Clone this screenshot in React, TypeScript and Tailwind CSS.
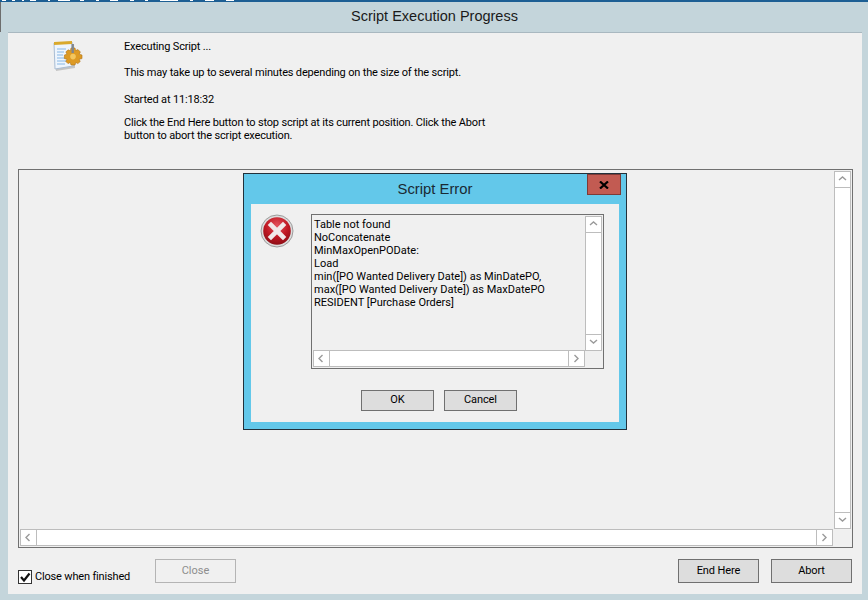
import React from 'react';

const font = "font-['Roboto','Liberation_Sans',Arial,sans-serif]";
const titleFont = "font-['Liberation_Sans',Arial,sans-serif]";

const Chevron: React.FC<{ dir: 'up' | 'down' | 'left' | 'right' }> = ({ dir }) => {
  const paths = {
    up: 'M1 5 L4.5 2 L8 5',
    down: 'M1 2 L4.5 5 L8 2',
    left: 'M5.5 1 L2 4.5 L5.5 8',
    right: 'M2.5 1 L6 4.5 L2.5 8',
  };
  return (
    <svg width="9" height="9" viewBox="0 0 9 9" fill="none" stroke="#9a9a9a" strokeWidth="1.4">
      <path d={paths[dir]} />
    </svg>
  );
};

const ArrowBox: React.FC<{ dir: 'up' | 'down' | 'left' | 'right'; className: string }> = ({ dir, className }) => (
  <div className={`flex items-center justify-center shrink-0 bg-white border-[#bdbdbd] ${className}`}>
    <Chevron dir={dir} />
  </div>
);

const VScroll: React.FC = () => (
  <div className="flex flex-col h-full w-[17px] border border-[#bdbdbd] bg-white">
    <ArrowBox dir="up" className="h-[16px] border-b" />
    <div className="flex-1" />
    <ArrowBox dir="down" className="h-[16px] border-t" />
  </div>
);

const HScroll: React.FC = () => (
  <div className="flex w-full h-[17px] border border-[#bdbdbd] bg-white">
    <ArrowBox dir="left" className="w-[16px] border-r" />
    <div className="flex-1" />
    <ArrowBox dir="right" className="w-[16px] border-l" />
  </div>
);

const Btn: React.FC<{ label: string; className?: string }> = ({ label, className }) => (
  <div
    className={`flex items-center justify-center bg-[#dddddd] border border-[#707070] text-[11px] tracking-[-0.1px] text-black ${className ?? ''}`}
  >
    {label}
  </div>
);

const NoteIcon: React.FC = () => (
  <svg width="30" height="32" viewBox="0 0 30 32" className="block">
    <path d="M2 5 L21 4 L22 28 L3 31 Z" fill="#000" opacity="0.18" />
    <path d="M1 3 L19 2 L20 26 L2 29 Z" fill="#eef5fd" stroke="#a9bdd4" strokeWidth="1" />
    <path d="M1 2 L19 1 L19 4 L1 5 Z" fill="#d9a92c" />
    <path d="M4 9 H13 M4 12 H11 M4 15 H10 M4 18 H13 M4 21 H15 M4 24 H12" stroke="#86b7e6" strokeWidth="1" />
    <path
      d="M18 8 L22 8 L22.6 10.6 L25 9.6 L27.4 12 L26.2 14.2 L29 15 L29 18.6 L26.2 19.2 L27.2 21.6 L24.8 23.6 L22.8 22.4 L22 25 L18 25 L17.2 22.4 L15 23.6 L12.8 21.4 L14 19.2 L11.4 18.6 L11.4 15 L14 14.2 L12.8 12 L15 9.8 L17.4 10.8 Z"
      fill="#dd9a24"
      stroke="#b0741a"
      strokeWidth="0.6"
    />
    <circle cx="20" cy="16.6" r="2.8" fill="#f3c65e" />
    <rect x="18.5" y="4" width="2.4" height="9" fill="#7f858e" />
  </svg>
);

const ErrorIcon: React.FC = () => (
  <svg width="34" height="34" viewBox="0 0 34 34" className="block">
    <defs>
      <radialGradient id="err" cx="50%" cy="30%" r="75%">
        <stop offset="0%" stopColor="#e4525c" />
        <stop offset="55%" stopColor="#bf1722" />
        <stop offset="100%" stopColor="#860c14" />
      </radialGradient>
    </defs>
    <circle cx="17" cy="17" r="16" fill="#dcdcdc" stroke="#8a8a8a" strokeWidth="0.8" />
    <circle cx="17" cy="17" r="13.8" fill="url(#err)" />
    <path d="M11 11 L23 23 M23 11 L11 23" stroke="#f1e9e9" strokeWidth="4.6" strokeLinecap="square" />
  </svg>
);

const App: React.FC = () => {
  return (
    <div className={`${font} relative w-[868px] h-[600px] overflow-hidden bg-[#c4d5db] text-black`}>
      <div className="h-[2px] bg-[#1d5f94] overflow-hidden">
        {/* clipped tail of the window behind */}
        <svg width="240" height="2" className="block">
          <path
            d="M2 0.5 H6 M12 0.5 H15 M22 0.5 H24 M30 0.5 H36 M48 0.5 H50 M58 0.5 H70 M80 0.5 H84 M96 0.5 H99 M110 0.5 H118 M130 0.5 H134 M145 0.5 H148 M160 0.5 H178 M190 0.5 H193 M205 0.5 H214 M226 0.5 H234"
            stroke="#fff"
            strokeWidth="1"
          />
        </svg>
      </div>
      <div
        className={`${titleFont} h-[30px] flex items-center justify-center text-[14.5px] text-[#1a1a1a] border-l border-[#6d6d6d]`}
      >
        Script Execution Progress
      </div>
      <div className="ml-[8px] mr-[6px] h-[562px] flex flex-col bg-[#f0f0f0] border-t border-[#a9b8c0] relative">
        <div className="h-[136px] shrink-0 flex">
          <div className="w-[116px] pl-[45px] pt-[7px] shrink-0">
            <NoteIcon />
          </div>
          <div className="text-[11px] tracking-[-0.17px] leading-[13px] pt-[7px]">
            <p>Executing Script ...</p>
            <p className="mt-[13px]">This may take up to several minutes depending on the size of the script.</p>
            <p className="mt-[14px]">Started at 11:18:32</p>
            <p className="mt-[10px]">
              Click the End Here button to stop script at its current position. Click the Abort
              <br />
              button to abort the script execution.
            </p>
          </div>
        </div>
        <div className="ml-[10px] w-[835px] h-[379px] shrink-0 border border-[#707070] p-[1px] flex flex-col">
          <div className="flex-1 flex justify-end min-h-0">
            <VScroll />
          </div>
          <div className="w-[813px]">
            <HScroll />
          </div>
        </div>
        <div className="flex items-start pt-[11px] pl-[10px]">
          <div className="flex items-center w-[137px] mt-[10px]">
            <div className="w-[14px] h-[14px] border border-[#333] bg-white flex items-center justify-center">
              <svg width="12" height="12" viewBox="0 0 12 12" fill="none" stroke="#111" strokeWidth="2.2">
                <path d="M2 6 L5 9.5 L10.5 2.5" />
              </svg>
            </div>
            <span className="text-[11px] tracking-[-0.17px] ml-[3px]">Close when finished</span>
          </div>
          <div className="w-[81px] h-[24px] flex items-center justify-center border border-[#b4b4b4] text-[11px] text-[#8d8d8d]">
            Close
          </div>
          <Btn label="End Here" className="ml-[442px] w-[81px] h-[24px]" />
          <Btn label="Abort" className="ml-[12px] w-[81px] h-[24px]" />
        </div>
      </div>

      {/* modal error dialog over the progress window */}
      <div className="absolute left-[243px] top-[173px] w-[384px] h-[257px] border border-[#22303a] bg-[#63c8ea] pt-[30px] px-[7px] pb-[7px]">
        <div className={`${titleFont} absolute left-0 right-0 top-[6px] text-center text-[14.8px] leading-[18px] text-[#1a2a33]`}>
          Script Error
        </div>
        <div className="absolute right-[5px] top-0 w-[34px] h-[21px] bg-[#c25b52] border border-[#7e3a36] flex items-center justify-center">
          <svg width="10" height="8" viewBox="0 0 10 8" stroke="#000" strokeWidth="2.2" fill="none">
            <path d="M1 0.5 L9 7.5 M9 0.5 L1 7.5" />
          </svg>
        </div>
        <div className="h-[218px] bg-[#f0f0f0] flex flex-col">
          <div className="flex pt-[10px] pl-[9px]">
            <div className="w-[51px] shrink-0">
              <ErrorIcon />
            </div>
            <div className="w-[293px] h-[155px] border border-[#707070] p-[1px] flex">
              <div className="flex-1 flex flex-col min-w-0">
                <div className="flex-1 text-[11px] leading-[13px] pl-[1px] pt-[2px]">
                  <p>Table not found</p>
                  <p>NoConcatenate</p>
                  <p>MinMaxOpenPODate:</p>
                  <p>Load</p>
                  <p>min([PO Wanted Delivery Date]) as MinDatePO,</p>
                  <p>max([PO Wanted Delivery Date]) as MaxDatePO</p>
                  <p>RESIDENT [Purchase Orders]</p>
                </div>
                <HScroll />
              </div>
              <div className="h-[135px]">
                <VScroll />
              </div>
            </div>
          </div>
          <div className="flex pl-[110px] pt-[21px] gap-[10px]">
            <Btn label="OK" className="w-[73px] h-[21px] border-[#3a7fb5]" />
            <Btn label="Cancel" className="w-[73px] h-[21px]" />
          </div>
        </div>
      </div>
    </div>
  );
};

export default App;
